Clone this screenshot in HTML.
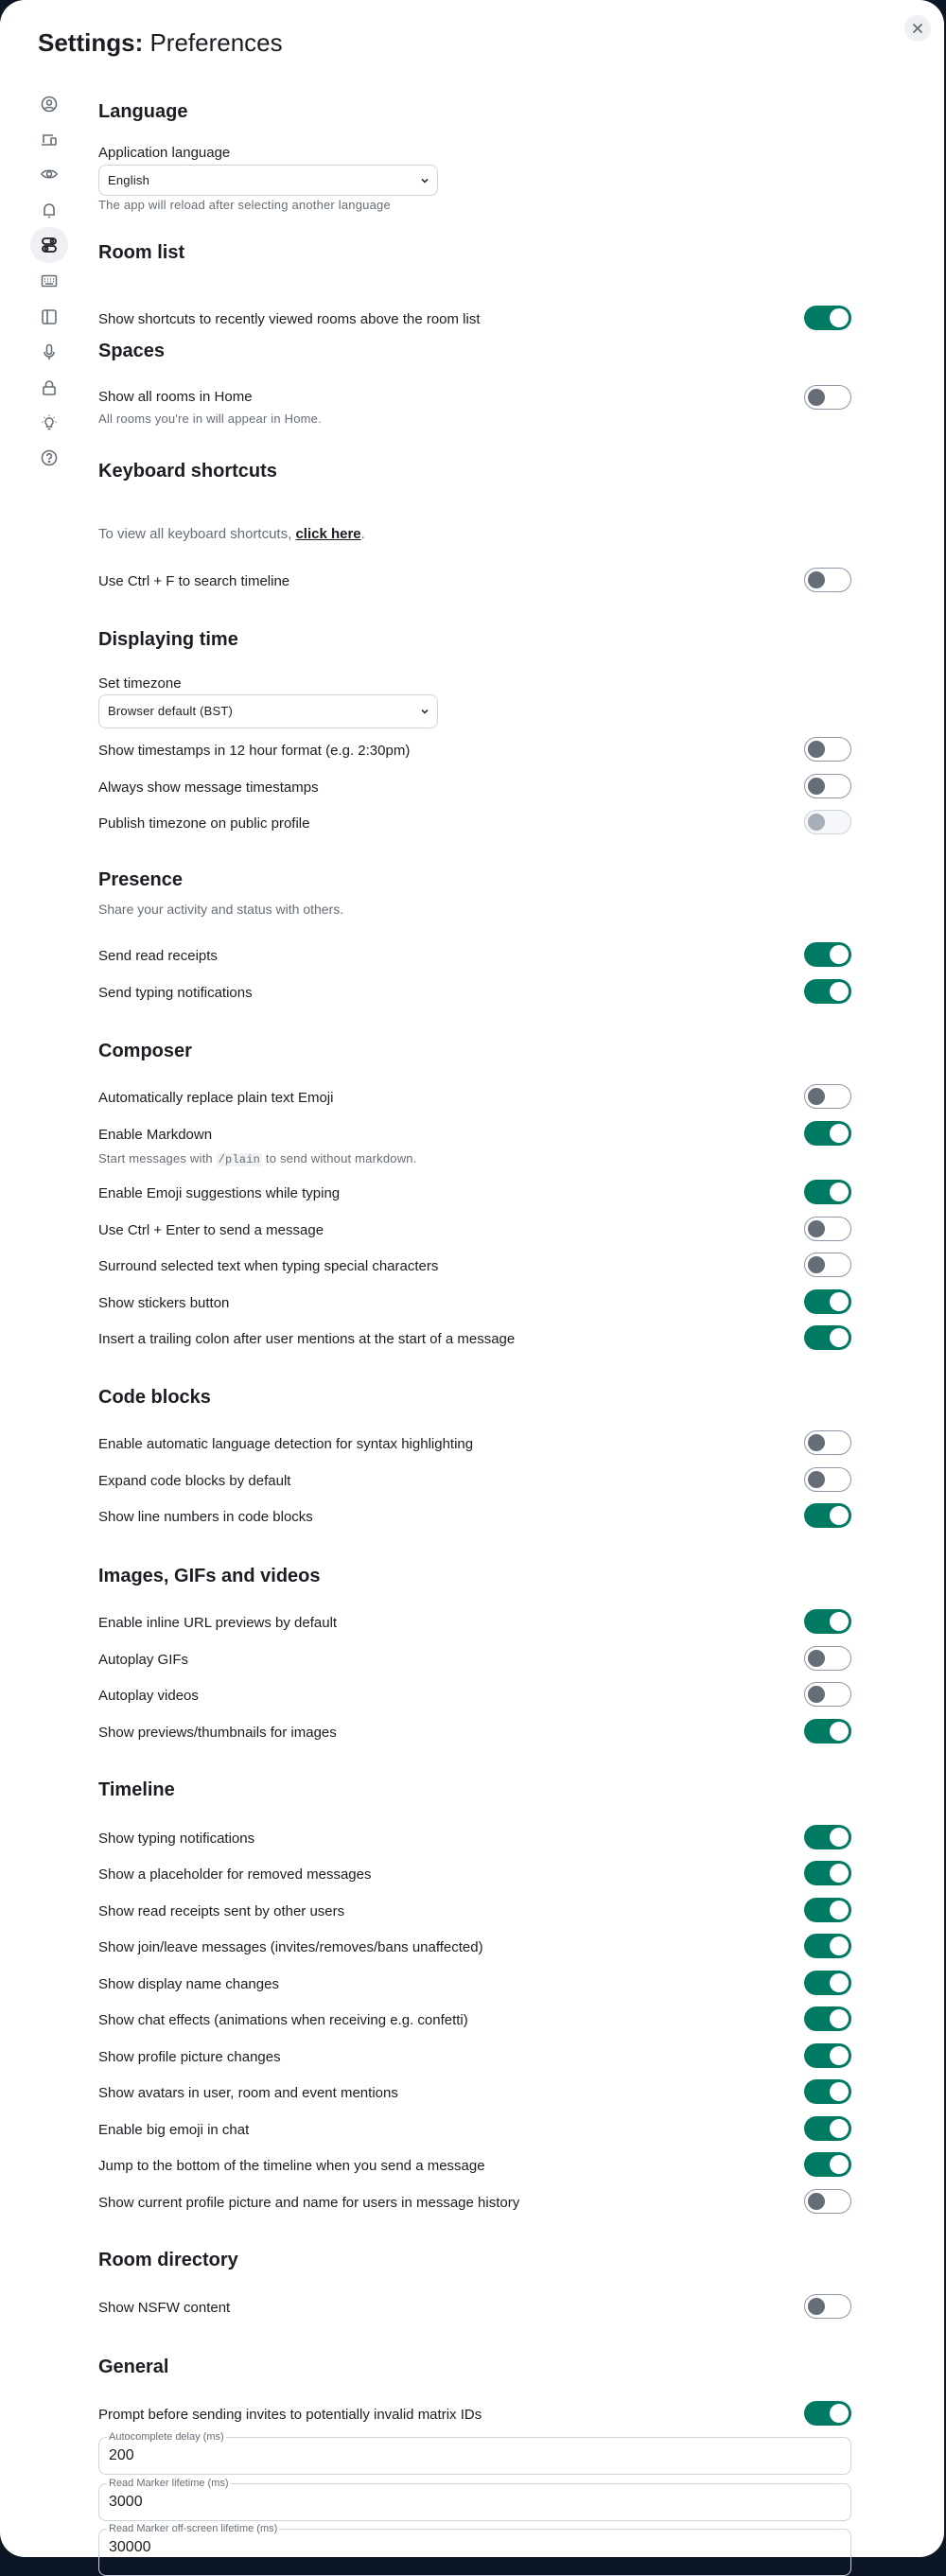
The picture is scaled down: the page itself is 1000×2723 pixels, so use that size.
<!DOCTYPE html>
<html><head><meta charset="utf-8"><style>
*{margin:0;padding:0;box-sizing:border-box}
body{width:1000px;height:2704px;background:#0d1625;font-family:"Liberation Sans",sans-serif;color:#1b1d22;position:relative;overflow:hidden}
.dlg{position:absolute;left:0;top:0;width:998px;height:2703px;background:#fff;border-radius:26px}
.a{position:absolute;white-space:nowrap}
.h{left:104px;font-size:20px;font-weight:bold;height:26px;line-height:26px}
.r{left:104px;font-size:15px;height:20px;line-height:20px}
.s{left:104px;font-size:13px;color:#656d77;height:18px;line-height:18px;letter-spacing:.2px}
.t{position:absolute;left:850px;width:50px;height:26px;border-radius:13px}
.on{background:#007a62}
.on:after{content:"";position:absolute;right:3px;top:3px;width:20px;height:20px;border-radius:50%;background:#fff}
.off{border:1px solid #8d97a5;background:#fff}
.off:after{content:"";position:absolute;left:3px;top:3px;width:18px;height:18px;border-radius:50%;background:#656d77}
.dis{border:1px solid #cdd3da;background:#f5f7fa}
.dis:after{content:"";position:absolute;left:3px;top:3px;width:18px;height:18px;border-radius:50%;background:#a7aeb8}
.sel{position:absolute;left:104px;width:359px;border:1px solid #cdd3da;border-radius:8px;font-size:13px;padding-left:9px;letter-spacing:.2px}
.sel svg{position:absolute;right:8px;top:50%;margin-top:-5px}
.ic{position:absolute;left:42px;width:20px;height:20px}
.fld{position:absolute;left:104px;width:796px;height:40px;border:1px solid #cdd3da;border-radius:8px}
.fld .l{position:absolute;left:8px;top:-7px;background:#fff;padding:0 2px;font-size:11px;color:#656d77}
.fld .v{position:absolute;left:10px;top:10px;font-size:16px}
code{font-family:"Liberation Mono",monospace;background:#f1f2f4;font-size:12px;padding:0 2px}
</style></head><body>
<div class="dlg">
<div class="a" style="left:40px;top:30px;font-size:26px;line-height:30px"><b>Settings:</b> Preferences</div>
<div style="position:absolute;left:956px;top:16px;width:28px;height:28px;border-radius:50%;background:#eef0f3"><svg width="28" height="28" viewBox="0 0 28 28"><path d="M10 10L18 18M18 10L10 18" stroke="#656d77" stroke-width="1.8" stroke-linecap="round"/></svg></div>

<div style="position:absolute;left:32px;top:240px;width:40px;height:38px;border-radius:19px;background:#eef0f3"></div>
<svg class="ic" style="top:100px" viewBox="0 0 20 20" fill="none" stroke="#656d77" stroke-width="1.6"><circle cx="10" cy="10" r="7.5"/><circle cx="10" cy="8.5" r="2.5"/><path d="M5.5 15c1.5-2 7.5-2 9 0"/></svg>
<svg class="ic" style="top:138px" viewBox="0 0 20 20" fill="none" stroke="#656d77" stroke-width="1.6"><path d="M4 13V5h10M2 15h10"/><rect x="12" y="8" width="5" height="7" rx="1"/></svg>
<svg class="ic" style="top:174px" viewBox="0 0 20 20" fill="none" stroke="#656d77" stroke-width="1.6"><path d="M2 10c3-5 13-5 16 0c-3 5-13 5-16 0z"/><circle cx="10" cy="10" r="2.5"/></svg>
<svg class="ic" style="top:212px" viewBox="0 0 20 20" fill="none" stroke="#656d77" stroke-width="1.6"><path d="M5 15V9a5 5 0 0 1 10 0v6zM4 15h12M9 17.5h2"/></svg>
<svg class="ic" style="top:249px" viewBox="0 0 20 20" fill="none" stroke="#1b1d22" stroke-width="1.8"><rect x="3" y="3" width="14" height="6" rx="3"/><rect x="3" y="11" width="14" height="6" rx="3"/><circle cx="13" cy="6" r="1.5"/><circle cx="7" cy="14" r="1.5"/></svg>
<svg class="ic" style="top:287px" viewBox="0 0 20 20" fill="none" stroke="#656d77" stroke-width="1.5"><rect x="2.5" y="4.5" width="15" height="11" rx="1"/><path d="M5 8h1M8 8h1M11 8h1M14 8h1M5 10.5h1M8 10.5h1M11 10.5h1M14 10.5h1M6 13h8"/></svg>
<svg class="ic" style="top:325px" viewBox="0 0 20 20" fill="none" stroke="#656d77" stroke-width="1.6"><rect x="3" y="3" width="14" height="14" rx="2"/><path d="M8 3v14"/></svg>
<svg class="ic" style="top:362px" viewBox="0 0 20 20" fill="none" stroke="#656d77" stroke-width="1.6"><rect x="7.5" y="2.5" width="5" height="10" rx="2.5"/><path d="M5 10a5 5 0 0 0 10 0M10 15v3"/></svg>
<svg class="ic" style="top:400px" viewBox="0 0 20 20" fill="none" stroke="#656d77" stroke-width="1.6"><rect x="4" y="9" width="12" height="8" rx="1"/><path d="M6.5 9V6.5a3.5 3.5 0 0 1 7 0V9"/></svg>
<svg class="ic" style="top:437px" viewBox="0 0 20 20" fill="none" stroke="#656d77" stroke-width="1.5"><path d="M7.5 14v-2a4 4 0 1 1 5 0v2zM8.5 16.5h3M2.5 9h1M16.5 9h1M4.5 4l.7.7M15.5 4l-.7.7M10 1.5v1"/></svg>
<svg class="ic" style="top:474px" viewBox="0 0 20 20" fill="none" stroke="#656d77" stroke-width="1.6"><circle cx="10" cy="10" r="7.5"/><path d="M7.8 8a2.3 2.3 0 1 1 3 2.2c-.6.3-.8.7-.8 1.5"/><circle cx="10" cy="14" r=".5" fill="#656d77"/></svg>

<div class="a h" style="top:105px">Language</div>
<div class="a r" style="top:152px">Application language</div>
<div class="sel" style="top:174px;height:33px;line-height:31px">English<svg width="10" height="10" viewBox="0 0 10 10"><path d="M2 3.5l3 3 3-3" stroke="#1b1d22" stroke-width="1.5" fill="none"/></svg></div>
<div class="a s" style="top:208px">The app will reload after selecting another language</div>

<div class="a h" style="top:254px">Room list</div>
<div class="a r" style="top:328px">Show shortcuts to recently viewed rooms above the room list</div><div class="t on" style="top:323px"></div>

<div class="a h" style="top:358px">Spaces</div>
<div class="a r" style="top:410px">Show all rooms in Home</div><div class="t off" style="top:407px"></div>
<div class="a s" style="top:434px">All rooms you're in will appear in Home.</div>

<div class="a h" style="top:485px">Keyboard shortcuts</div>
<div class="a s" style="top:555px;font-size:15px;height:20px;line-height:20px;letter-spacing:0">To view all keyboard shortcuts, <b style="color:#1b1d22;text-decoration:underline">click here</b>.</div>
<div class="a r" style="top:605px">Use Ctrl + F to search timeline</div><div class="t off" style="top:600px"></div>

<div class="a h" style="top:663px">Displaying time</div>
<div class="a r" style="top:713px">Set timezone</div>
<div class="sel" style="top:734px;height:36px;line-height:34px">Browser default (BST)<svg width="10" height="10" viewBox="0 0 10 10"><path d="M2 3.5l3 3 3-3" stroke="#1b1d22" stroke-width="1.5" fill="none"/></svg></div>
<div class="a r" style="top:784px">Show timestamps in 12 hour format (e.g. 2:30pm)</div><div class="t off" style="top:779px"></div>
<div class="a r" style="top:823px">Always show message timestamps</div><div class="t off" style="top:818px"></div>
<div class="a r" style="top:861px">Publish timezone on public profile</div><div class="t dis" style="top:856px"></div>

<div class="a h" style="top:917px">Presence</div>
<div class="a s" style="top:952px;font-size:14px;letter-spacing:0">Share your activity and status with others.</div>
<div class="a r" style="top:1001px">Send read receipts</div><div class="t on" style="top:996px"></div>
<div class="a r" style="top:1040px">Send typing notifications</div><div class="t on" style="top:1035px"></div>

<div class="a h" style="top:1098px">Composer</div>
<div class="a r" style="top:1151px">Automatically replace plain text Emoji</div><div class="t off" style="top:1146px"></div>
<div class="a r" style="top:1190px">Enable Markdown</div><div class="t on" style="top:1185px"></div>
<div class="a s" style="top:1216px">Start messages with <code>/plain</code> to send without markdown.</div>
<div class="a r" style="top:1252px">Enable Emoji suggestions while typing</div><div class="t on" style="top:1247px"></div>
<div class="a r" style="top:1291px">Use Ctrl + Enter to send a message</div><div class="t off" style="top:1286px"></div>
<div class="a r" style="top:1329px">Surround selected text when typing special characters</div><div class="t off" style="top:1324px"></div>
<div class="a r" style="top:1368px">Show stickers button</div><div class="t on" style="top:1363px"></div>
<div class="a r" style="top:1406px">Insert a trailing colon after user mentions at the start of a message</div><div class="t on" style="top:1401px"></div>

<div class="a h" style="top:1464px">Code blocks</div>
<div class="a r" style="top:1517px">Enable automatic language detection for syntax highlighting</div><div class="t off" style="top:1512px"></div>
<div class="a r" style="top:1556px">Expand code blocks by default</div><div class="t off" style="top:1551px"></div>
<div class="a r" style="top:1594px">Show line numbers in code blocks</div><div class="t on" style="top:1589px"></div>

<div class="a h" style="top:1653px">Images, GIFs and videos</div>
<div class="a r" style="top:1706px">Enable inline URL previews by default</div><div class="t on" style="top:1701px"></div>
<div class="a r" style="top:1745px">Autoplay GIFs</div><div class="t off" style="top:1740px"></div>
<div class="a r" style="top:1783px">Autoplay videos</div><div class="t off" style="top:1778px"></div>
<div class="a r" style="top:1822px">Show previews/thumbnails for images</div><div class="t on" style="top:1817px"></div>

<div class="a h" style="top:1879px">Timeline</div>
<div class="a r" style="top:1934px">Show typing notifications</div><div class="t on" style="top:1929px"></div>
<div class="a r" style="top:1972px">Show a placeholder for removed messages</div><div class="t on" style="top:1967px"></div>
<div class="a r" style="top:2011px">Show read receipts sent by other users</div><div class="t on" style="top:2006px"></div>
<div class="a r" style="top:2049px">Show join/leave messages (invites/removes/bans unaffected)</div><div class="t on" style="top:2044px"></div>
<div class="a r" style="top:2088px">Show display name changes</div><div class="t on" style="top:2083px"></div>
<div class="a r" style="top:2126px">Show chat effects (animations when receiving e.g. confetti)</div><div class="t on" style="top:2121px"></div>
<div class="a r" style="top:2165px">Show profile picture changes</div><div class="t on" style="top:2160px"></div>
<div class="a r" style="top:2203px">Show avatars in user, room and event mentions</div><div class="t on" style="top:2198px"></div>
<div class="a r" style="top:2242px">Enable big emoji in chat</div><div class="t on" style="top:2237px"></div>
<div class="a r" style="top:2280px">Jump to the bottom of the timeline when you send a message</div><div class="t on" style="top:2275px"></div>
<div class="a r" style="top:2319px">Show current profile picture and name for users in message history</div><div class="t off" style="top:2314px"></div>

<div class="a h" style="top:2376px">Room directory</div>
<div class="a r" style="top:2430px">Show NSFW content</div><div class="t off" style="top:2425px"></div>

<div class="a h" style="top:2489px">General</div>
<div class="a r" style="top:2543px">Prompt before sending invites to potentially invalid matrix IDs</div><div class="t on" style="top:2538px"></div>
<div class="fld" style="top:2576px"><span class="l">Autocomplete delay (ms)</span><span class="v">200</span></div>
<div class="fld" style="top:2625px"><span class="l">Read Marker lifetime (ms)</span><span class="v">3000</span></div>
<div class="fld" style="top:2673px;height:50px"><span class="l">Read Marker off-screen lifetime (ms)</span><span class="v">30000</span></div>
</div>
</body></html>
